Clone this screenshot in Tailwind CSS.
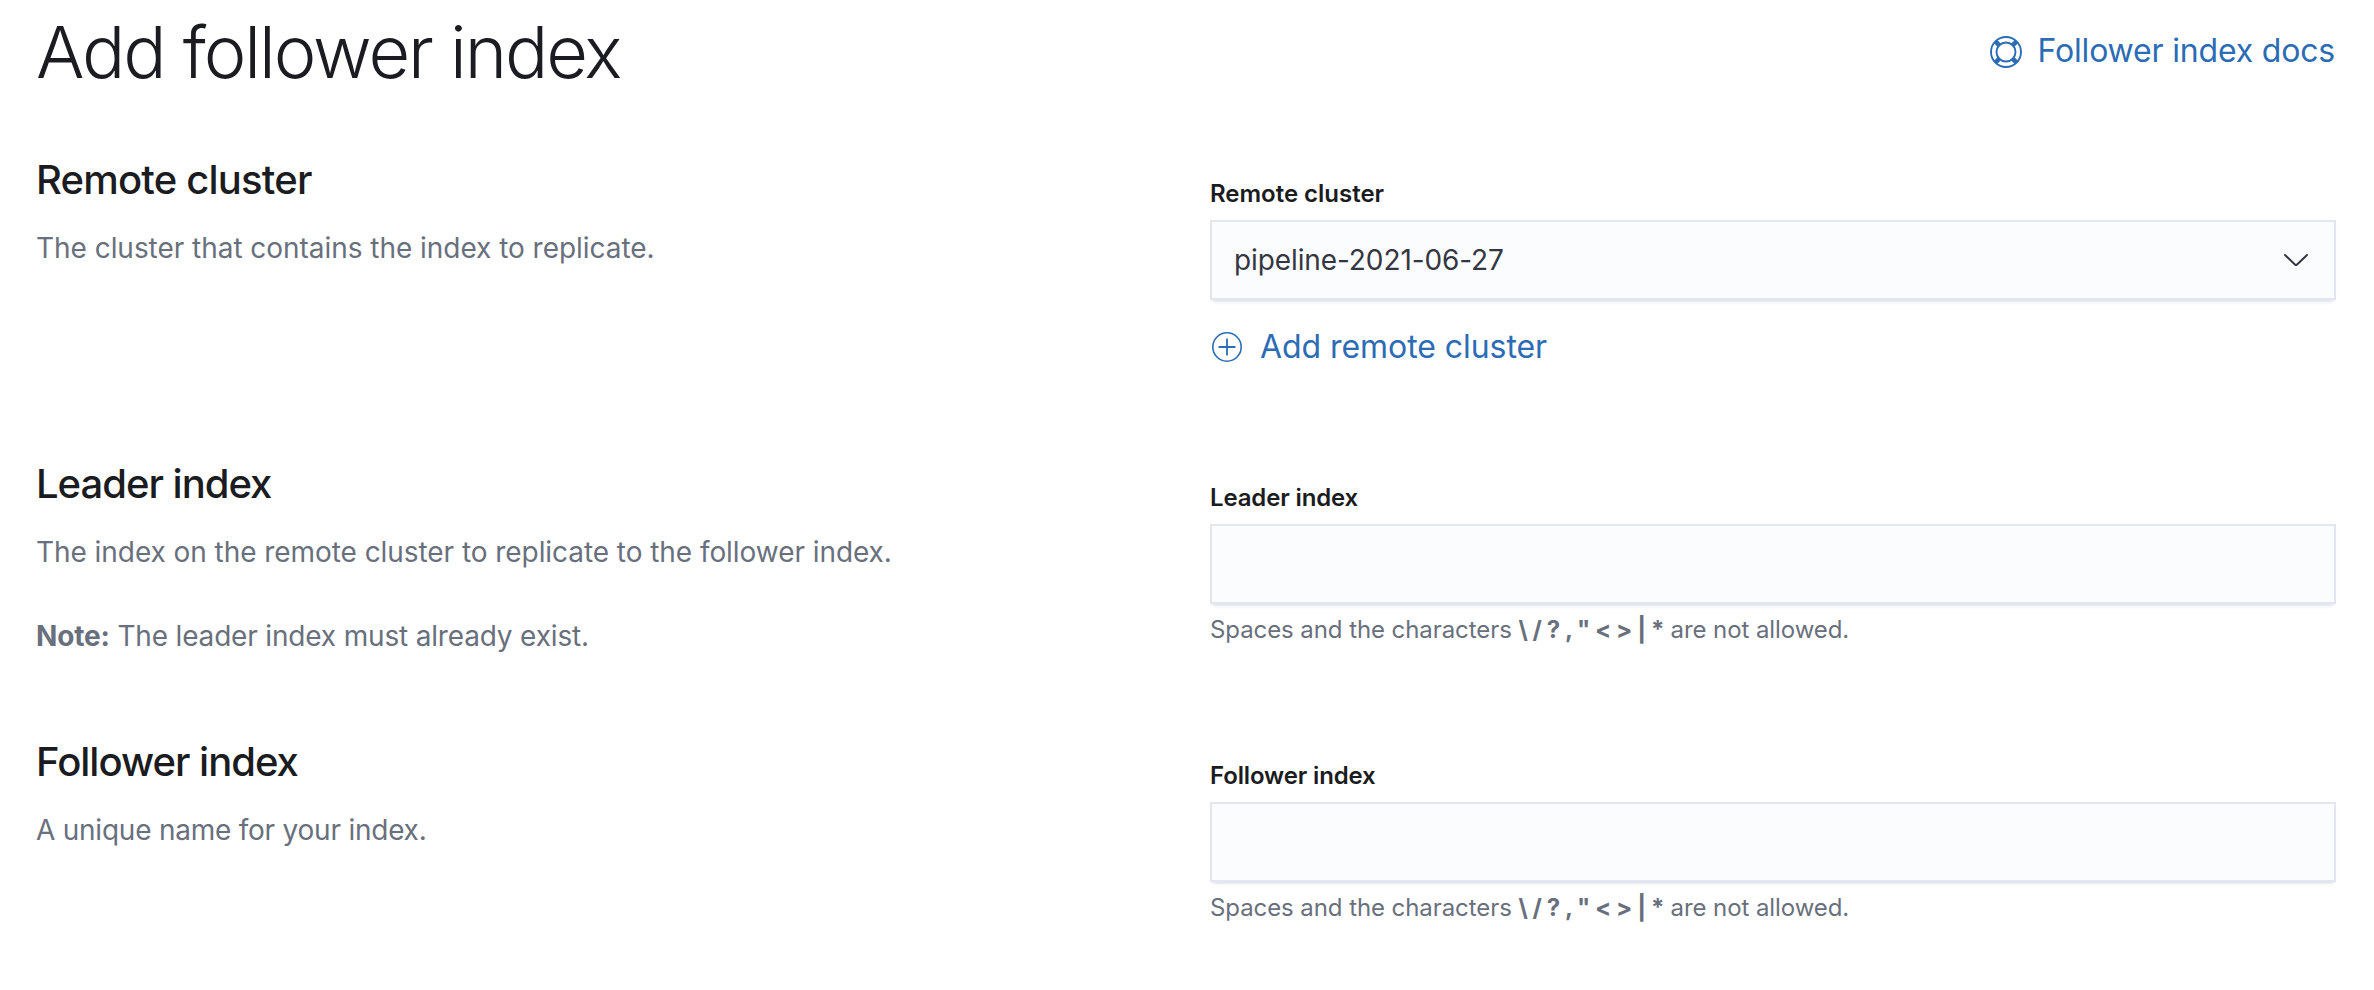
<!DOCTYPE html>
<html lang="en">
<head>
<meta charset="utf-8">
<title>Add follower index</title>
<script src="https://cdn.jsdelivr.net/npm/@tailwindcss/browser@4"></script>
</head>
<body class="bg-white font-['Inter',sans-serif] text-[28px] tracking-[-0.14px] text-[#343741]">
<main class="h-[990px] w-full overflow-hidden pl-9 pr-[38px] pt-3">
  <header class="flex items-start justify-between">
    <h1 class="text-[72px] leading-[80px] font-light tracking-[-2.08px] text-[#1a1c21]">Add follower index</h1>
    <a class="mt-[15px] flex items-center gap-4 pr-px text-[32px] leading-[48px] tracking-[-0.18px] text-[#2b6cb5]">
      <svg class="mt-0.5 size-8" viewBox="0 0 32 32" fill="none" stroke="currentColor" stroke-width="1.9">
        <circle cx="16" cy="16" r="15"/><circle cx="16" cy="16" r="9.5"/>
        <path stroke-width="4.6" d="M5.6 5.6l3.6 3.6M26.4 5.6l-3.6 3.6M5.6 26.4l3.6-3.6M26.4 26.4l-3.6-3.6"/>
      </svg>
      <span>Follower index docs</span>
    </a>
  </header>

  <section class="mt-16 flex h-[304px] justify-between">
    <div>
      <h2 class="text-[40px] leading-[48px] font-medium tracking-[-0.81px] text-[#1a1c21]">Remote cluster</h2>
      <p class="mt-[23px] leading-[42px] tracking-[-0.04px] text-[#69707d]">The cluster that contains the index to replicate.</p>
    </div>
    <div class="w-[1126px] pt-5">
      <label class="block text-2xl leading-9 font-semibold tracking-[-0.02px] text-[#1a1c21]">Remote cluster</label>
      <div class="mt-2 flex h-20 items-center justify-between border-2 border-[#e3e6f0] bg-[#fbfcfd] pr-[25px] pl-[22px] shadow-[0_2px_2px_-1px_rgba(152,162,179,0.2),0_6px_4px_-4px_rgba(152,162,179,0.2)]">
        <span class="tracking-[-0.1px]">pipeline-2021-06-27</span>
        <svg class="h-4 w-[26px]" viewBox="0 0 26 16" fill="none" stroke="#343741" stroke-width="2" stroke-linecap="round" stroke-linejoin="round"><path d="M2 3l10.2 9.7q.8.6 1.6 0L24 3"/></svg>
      </div>
      <a class="mt-[23px] flex items-center gap-[18px] pl-0.5 text-[32px] leading-[48px] tracking-[-0.06px] text-[#2b6cb5]">
        <svg class="size-[30px]" viewBox="0 0 30 30" fill="none" stroke="currentColor" stroke-width="1.6"><circle cx="15" cy="15" r="14.2"/><path stroke-linecap="round" stroke-width="1.8" d="M7.2 15h15.6M15 7.2v15.6"/></svg>
        <span>Add remote cluster</span>
      </a>
    </div>
  </section>

  <section class="flex h-[278px] justify-between">
    <div>
      <h2 class="text-[40px] leading-[48px] font-medium tracking-[-1px] text-[#1a1c21]">Leader index</h2>
      <p class="mt-[23px] leading-[42px] tracking-[-0.06px] text-[#69707d]">The index on the remote cluster to replicate to the follower index.</p>
      <p class="mt-[42px] leading-[42px] tracking-[-0.17px] text-[#69707d]"><strong class="font-bold">Note:</strong> The leader index must already exist.</p>
    </div>
    <div class="w-[1126px] pt-5">
      <label class="block text-2xl leading-9 font-semibold text-[#1a1c21]">Leader index</label>
      <div class="mt-2 h-20 border-2 border-[#e3e6f0] bg-[#fbfcfd] shadow-[0_2px_2px_-1px_rgba(152,162,179,0.2),0_6px_4px_-4px_rgba(152,162,179,0.2)]"></div>
      <p class="mt-2 text-2xl leading-9 tracking-[-0.08px] text-[#69707d]">Spaces and the characters <strong class="font-bold tracking-[-0.44px]">\ / ? , " &lt; &gt; | *</strong> are not allowed.</p>
    </div>
  </section>

  <section class="flex justify-between">
    <div>
      <h2 class="text-[40px] leading-[48px] font-medium tracking-[-1px] text-[#1a1c21]">Follower index</h2>
      <p class="mt-[23px] leading-[42px] tracking-[-0.23px] text-[#69707d]">A unique name for your index.</p>
    </div>
    <div class="w-[1126px] pt-5">
      <label class="block text-2xl leading-9 font-semibold text-[#1a1c21]">Follower index</label>
      <div class="mt-2 h-20 border-2 border-[#e3e6f0] bg-[#fbfcfd] shadow-[0_2px_2px_-1px_rgba(152,162,179,0.2),0_6px_4px_-4px_rgba(152,162,179,0.2)]"></div>
      <p class="mt-2 text-2xl leading-9 tracking-[-0.08px] text-[#69707d]">Spaces and the characters <strong class="font-bold tracking-[-0.44px]">\ / ? , " &lt; &gt; | *</strong> are not allowed.</p>
    </div>
  </section>
</main>
</body>
</html>
